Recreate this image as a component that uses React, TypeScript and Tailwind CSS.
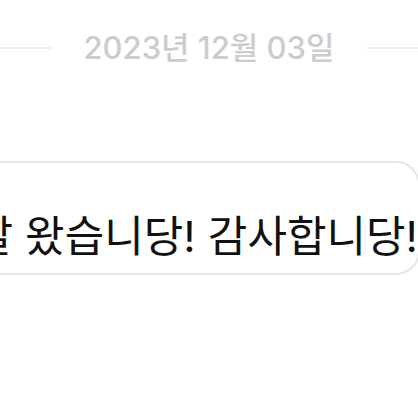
export default function App() {
  return (
    <div
      className="w-[418px] h-[418px] bg-white overflow-hidden flex flex-col"
      style={{ fontFamily: '"Inter", "Noto Sans CJK KR", "Noto Sans", sans-serif' }}
    >
      {/* date divider */}
      <div className="flex items-center gap-8 pt-[30px]">
        <div className="flex-1 h-[2px] bg-[#ececec]" />
        <span className="text-[31px] leading-[36px] font-medium text-[#cccccc] whitespace-nowrap">
          2023년 12월 03일
        </span>
        <div className="flex-1 h-[2px] bg-[#ececec]" />
      </div>

      {/* message bubble */}
      <div className="mt-[95px] -ml-[80px] w-[500px] h-[114px] border-2 border-[#e6e6e6] rounded-[24px] flex items-center justify-end pr-0 pt-[36px]">
        <span className="text-[43px] leading-[50px] font-normal text-[#111111] whitespace-nowrap">
          잘 왔습니당! 감사합니당!
        </span>
      </div>
    </div>
  );
}
